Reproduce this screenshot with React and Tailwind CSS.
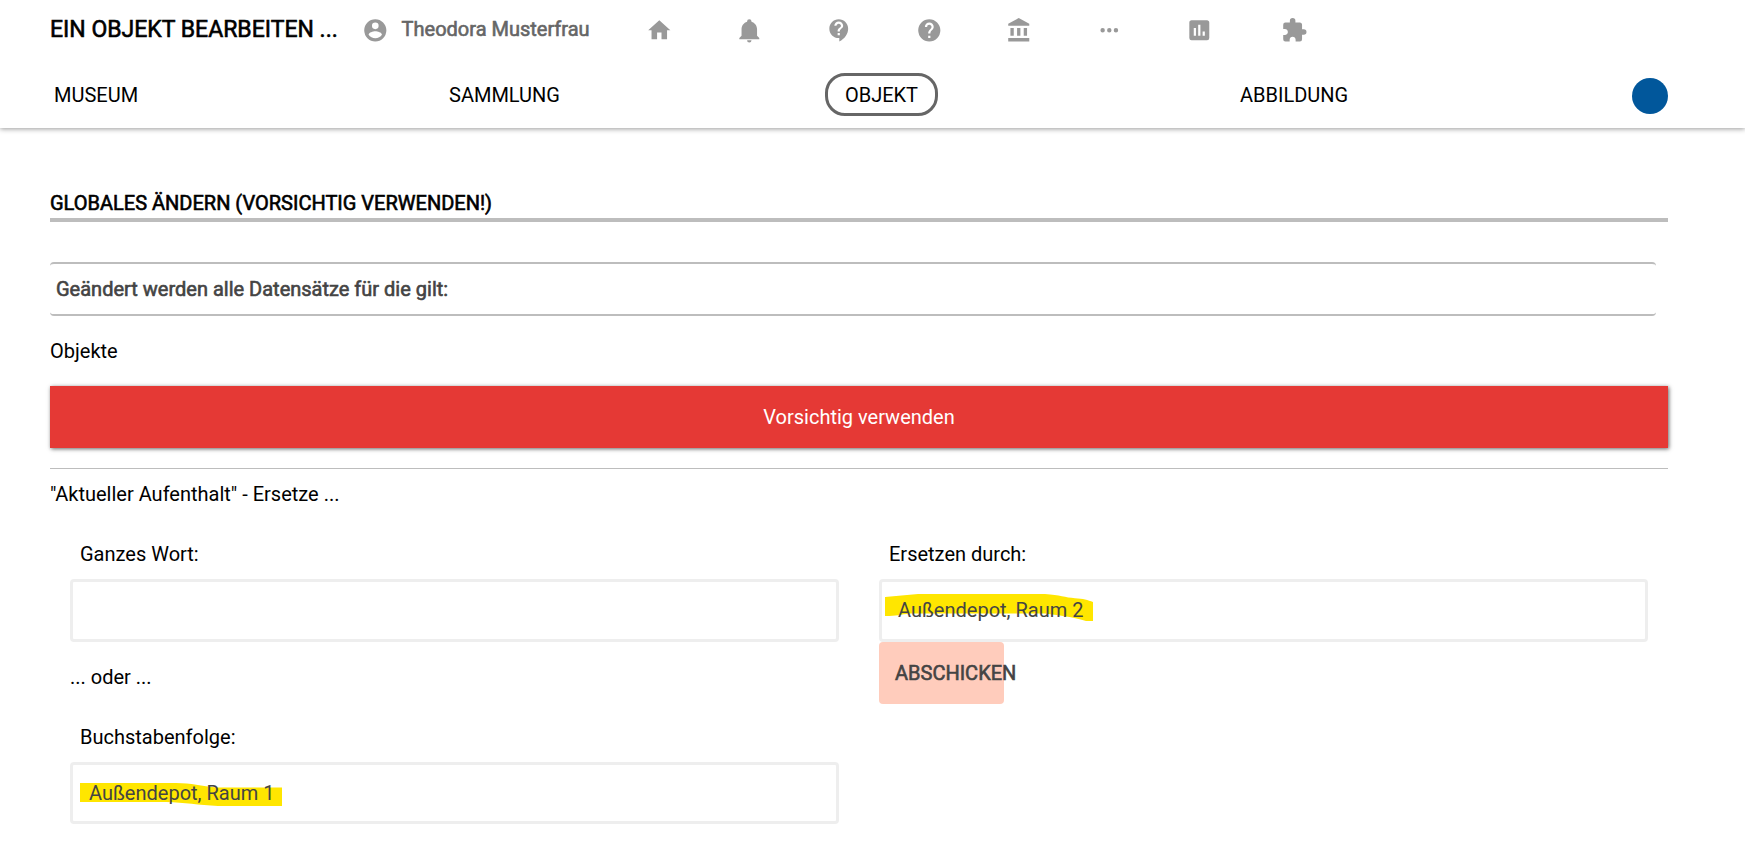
const ICONS = {
  account:
    'M12,19.2C9.5,19.2 7.29,17.92 6,16C6.03,14 10,12.9 12,12.9C14,12.9 17.97,14 18,16C16.71,17.92 14.5,19.2 12,19.2M12,5A3,3 0 0,1 15,8A3,3 0 0,1 12,11A3,3 0 0,1 9,8A3,3 0 0,1 12,5M12,2A10,10 0 0,0 2,12A10,10 0 0,0 12,22A10,10 0 0,0 22,12C22,6.47 17.5,2 12,2Z',
  home: 'M10,20V14H14V20H19V12H22L12,3L2,12H5V20H10Z',
  bell: 'M21,19V20H3V19L5,17V11C5,7.9 7.03,5.17 10,4.29C10,4.19 10,4.1 10,4A2,2 0 0,1 12,2A2,2 0 0,1 14,4C14,4.1 14,4.19 14,4.29C16.97,5.17 19,7.9 19,11V17L21,19M14,21A2,2 0 0,1 12,23A2,2 0 0,1 10,21',
  support:
    'M11.5 2C6.81 2 3 5.81 3 10.5S6.81 19 11.5 19h.5v3c4.86-2.34 8-7 8-11.5C20 5.81 16.19 2 11.5 2zm1 14.5h-2v-2h2v2zm0-3.5h-2c0-3.25 3-3 3-5 0-1.1-.9-2-2-2s-2 .9-2 2h-2c0-2.21 1.79-4 4-4s4 1.79 4 4c0 2.5-3 2.75-3 5z',
  help: 'M15.07,11.25L14.17,12.17C13.45,12.89 13,13.5 13,15H11V14.5C11,13.39 11.45,12.39 12.17,11.67L13.41,10.41C13.78,10.05 14,9.55 14,9C14,7.89 13.1,7 12,7A2,2 0 0,0 10,9H8A4,4 0 0,1 12,5A4,4 0 0,1 16,9C16,9.88 15.64,10.67 15.07,11.25M13,19H11V17H13M12,2A10,10 0 0,0 2,12A10,10 0 0,0 12,22A10,10 0 0,0 22,12C22,6.47 17.5,2 12,2Z',
  bank: 'M11.5,1L2,6V8H21V6M16,10V17H19V10M2,22H21V19H2M10,10V17H13V10M4,10V17H7V10H4Z',
  dots: 'M16,12A2,2 0 0,1 18,10A2,2 0 0,1 20,12A2,2 0 0,1 18,14A2,2 0 0,1 16,12M10,12A2,2 0 0,1 12,10A2,2 0 0,1 14,12A2,2 0 0,1 12,14A2,2 0 0,1 10,12M4,12A2,2 0 0,1 6,10A2,2 0 0,1 8,12A2,2 0 0,1 6,14A2,2 0 0,1 4,12Z',
  chart:
    'M17,17H15V13H17M13,17H11V7H13M9,17H7V10H9M19,3H5C3.89,3 3,3.89 3,5V19A2,2 0 0,0 5,21H19A2,2 0 0,0 21,19V5C21,3.89 20.1,3 19,3Z',
  puzzle:
    'M20.5,11H19V7C19,5.89 18.1,5 17,5H13V3.5A2.5,2.5 0 0,0 10.5,1A2.5,2.5 0 0,0 8,3.5V5H4A2,2 0 0,0 2,7V10.8H3.5C5,10.8 6.2,12 6.2,13.5C6.2,15 5,16.2 3.5,16.2H2V20A2,2 0 0,0 4,22H7.8V20.5C7.8,19 9,17.8 10.5,17.8C12,17.8 13.2,19 13.2,20.5V22H17A2,2 0 0,0 19,20V16H20.5A2.5,2.5 0 0,0 23,13.5A2.5,2.5 0 0,0 20.5,11Z',
};

const TOOLBAR = ['home', 'bell', 'support', 'help', 'bank', 'dots', 'chart'];

function Icon({ name }) {
  return (
    <svg viewBox="0 0 24 24" className="size-[26.6px] shrink-0 fill-[#999999]" aria-hidden="true">
      <path d={ICONS[name]} />
    </svg>
  );
}

function Header() {
  return (
    <header className="h-32 bg-white shadow-[0_1px_5px_rgba(0,0,0,0.4)]">
      <div className="flex h-[60px] items-center pl-[50px]">
        <h1 className="w-[312px] pb-0.5 text-[23px] leading-none whitespace-nowrap text-black [-webkit-text-stroke:0.6px]">
          EIN OBJEKT BEARBEITEN ...
        </h1>
        <Icon name="account" />
        <span className="ml-[13px] w-[213px] pb-0.5 text-xl leading-none whitespace-nowrap text-[#666666] [-webkit-text-stroke:0.6px]">
          Theodora Musterfrau
        </span>
        {TOOLBAR.map((name) => (
          <span key={name} className="flex w-[90px] justify-center">
            <Icon name={name} />
          </span>
        ))}
        <span className="ml-[5px] flex w-[90px] justify-center">
          <Icon name="puzzle" />
        </span>
      </div>
      <nav className="flex h-[69px] items-center pl-[54px] text-xl leading-none text-black">
        <a className="w-[395px]">MUSEUM</a>
        <a className="w-[376px]">SAMMLUNG</a>
        <a className="flex h-[43px] w-[113px] items-center justify-center rounded-[20px] border-3 border-[#666666]">
          OBJEKT
        </a>
        <a className="ml-[302px] w-[392px]">ABBILDUNG</a>
        <span className="mt-0.5 size-9 rounded-full bg-[#01579b]" />
      </nav>
    </header>
  );
}

function Field({ label, value, marker }) {
  return (
    <label className="block">
      <span className="flex h-[50px] items-center pl-2.5">{label}</span>
      <span className="relative flex h-[62.5px] items-center rounded border-3 border-[#eeeeee] pl-4 text-[#444444]">
        {marker}
        <span className="relative">{value}</span>
      </span>
    </label>
  );
}

function MarkerLeft() {
  return (
    <svg viewBox="0 0 202 23" className="absolute top-[18px] left-[7px] h-[23px] w-[202px] fill-[#ffe600]">
      <path d="M0 0H96C112 0 120 3 138 4.5H202V23H138C118 22 105 19.5 86 19H0Z" />
    </svg>
  );
}

function MarkerRight() {
  return (
    <svg viewBox="0 0 208 27" className="absolute top-3 left-[3px] h-[27px] w-[208px] fill-[#ffe600]">
      <path d="M0 3L33 0H160C175 1 180 3.5 190 4.2C198 4.5 203 6 208 8V27H201C192 24 180 22 160 19.5H25C15 20.5 12 22 0 22Z" />
    </svg>
  );
}

export default function App() {
  return (
    <div className="h-[847px] w-full overflow-hidden bg-white font-[Roboto,sans-serif] text-xl leading-none text-black">
      <Header />
      <main className="mr-[77px] ml-[50px] pt-[58px]">
        <h2 className="flex h-9 items-center border-b-4 border-[#bdbdbd] pt-0.5 [-webkit-text-stroke:0.6px]">
          GLOBALES ÄNDERN (VORSICHTIG VERWENDEN!)
        </h2>
        <div className="mt-10 mr-3 flex h-[54px] items-center rounded border-y-2 border-[#bdbdbd] pl-1.5 text-[#444444] [-webkit-text-stroke:0.6px]">
          Geändert werden alle Datensätze für die gilt:
        </div>
        <p className="flex h-[70px] items-center">Objekte</p>
        <div className="flex h-[62px] items-center justify-center bg-[#e53935] text-white shadow-[1px_1px_4px_rgba(0,0,0,0.6)]">
          Vorsichtig verwenden
        </div>
        <hr className="mt-5 border-t border-[#bdbdbd]" />
        <p className="flex h-[50px] items-center">"Aktueller Aufenthalt" - Ersetze ...</p>
        <div className="mt-2.5 mr-5 ml-5 grid grid-cols-2 gap-10">
          <div>
            <Field label="Ganzes Wort:" />
            <p className="flex h-[70px] items-center">... oder ...</p>
            <Field label="Buchstabenfolge:" value="Außendepot, Raum 1" marker={<MarkerLeft />} />
          </div>
          <div>
            <Field label="Ersetzen durch:" value="Außendepot, Raum 2" marker={<MarkerRight />} />
            <button className="flex h-[62px] w-[125px] items-center rounded bg-[#ffccbc] pl-4 whitespace-nowrap text-[#444444] [-webkit-text-stroke:0.6px]">
              ABSCHICKEN
            </button>
          </div>
        </div>
      </main>
    </div>
  );
}
